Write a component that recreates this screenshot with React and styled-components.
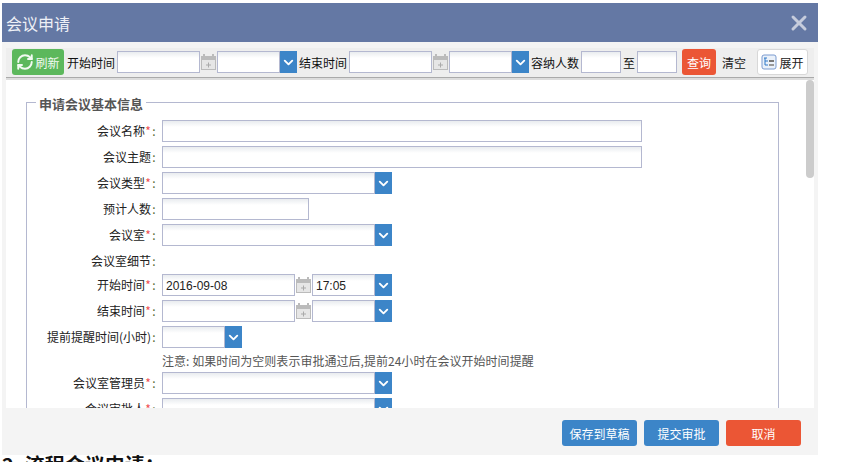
import React from 'react'
import styled, { createGlobalStyle } from 'styled-components'
import { RefreshCw, X, ChevronDown } from 'lucide-react'

const GlobalStyle = createGlobalStyle`
    html, body {
        margin: 0;
        padding: 0;
        height: 100%;
        overflow: hidden;
        background: #fff;
    }
    body {
        font-family: "Noto Sans CJK SC", "Liberation Sans", sans-serif;
        font-size: 12px;
        color: #222;
    }
    * {
        box-sizing: border-box;
    }
`

const Dialog = styled.div`
    width: 816px;
    height: 452px;
    margin: 3px 0 0 2px;
    background: #f4f4f4;
    display: flex;
    flex-direction: column;
`

const Header = styled.div`
    height: 39px;
    flex: none;
    background: #6478a4;
    display: flex;
    align-items: center;
    justify-content: space-between;
    padding: 0 7px 0 4px;
    color: #eef0f6;
    font-size: 16px;
`

const Close = styled.span`
    display: flex;
    color: #c6ccdc;
`

const Toolbar = styled.div`
    flex: none;
    height: 30px;
    margin: 6px 4px 0;
    padding: 1px 7px 0 6px;
    background: #eee;
    border-bottom: 1px solid #aaa;
    display: flex;
    align-items: flex-start;
`

const Divider = styled.div`
    flex: none;
    height: 2px;
    margin: 0 4px;
    background: #ddd;
`

const ToolLabel = styled.span`
    flex: none;
    width: ${p => p.$w}px;
    margin-left: ${p => p.$ml || 0}px;
    height: 26px;
    line-height: 28px;
    white-space: nowrap;
    color: #111;
`

const Button = styled.button`
    flex: none;
    width: ${p => p.$w}px;
    height: 26px;
    margin-left: ${p => p.$ml || 0}px;
    padding: 0;
    border: 0;
    border-radius: 3px;
    background: ${p => p.$bg};
    color: #fff;
    font: inherit;
    display: flex;
    align-items: center;
    justify-content: center;
`

const RefreshButton = styled(Button)`
    gap: 1px;
    color: #f2faf2;
`

const PlainButton = styled(Button)`
    background: transparent;
    color: #222;
`

const ExpandButton = styled(Button)`
    background: #fff;
    border: 1px solid #d8d8d8;
    color: #222;
    gap: 2px;
`

const Field = styled.input`
    flex: none;
    display: block;
    width: ${p => p.$w}px;
    height: 22px;
    margin: ${p => (p.$top ? `${p.$top}px` : 0)} 0 0 ${p => p.$ml || 0}px;
    padding: 1px 3px 0;
    border: 1px solid #b4b8d0;
    border-radius: 0;
    outline: none;
    background: linear-gradient(#e9ecef, #fff 6px);
    color: #222;
    font-family: "Liberation Sans", "Noto Sans CJK SC", sans-serif;
    font-size: 12px;
`

const Arrow = styled.span`
    flex: none;
    width: 17px;
    height: 22px;
    margin-top: ${p => p.$top || 0}px;
    background: #3c85c8;
    color: #fff;
    display: flex;
    align-items: center;
    justify-content: center;
`

const Cal = styled.svg`
    flex: none;
    width: 17px;
    height: 18px;
    margin-top: ${p => p.$top || 0}px;
`

const Body = styled.div`
    flex: 1;
    min-height: 0;
    margin: 0 4px;
    background: #fff;
    overflow: hidden;
    position: relative;
`

const ScrollThumb = styled.div`
    position: absolute;
    top: 0;
    right: 0;
    width: 8px;
    height: 98px;
    border-radius: 4px;
    background: #ccc;
`

const Group = styled.fieldset`
    margin: 14px 35px 0 20px;
    padding: 10px 0 40px;
    min-width: 0;
    border: 1px solid #b4b8d0;
    display: flex;
    flex-direction: column;
    gap: 4px;
`

const Legend = styled.legend`
    margin-left: 9px;
    padding: 0 3px;
    height: 16px;
    line-height: 20px;
    font-size: 13px;
    font-weight: 700;
    color: #555;
`

const Row = styled.div`
    display: grid;
    grid-template-columns: 130px 1fr;
    column-gap: 5px;
    height: ${p => p.$h || 22}px;
`

const Label = styled.label`
    text-align: right;
    line-height: 22px;
    color: #222;
    white-space: nowrap;

    em, i {
        display: inline-block;
        width: 6px;
        text-align: center;
        font-style: normal;
    }
    em {
        color: #f05050;
    }
    i {
        color: #556b2f;
    }
`

const Controls = styled.div`
    display: flex;
    align-items: flex-start;
`

const Note = styled.div`
    line-height: 18px;
    letter-spacing: 0.03px;
    color: #555;
    white-space: nowrap;
`

const Footer = styled.div`
    flex: none;
    height: 47px;
    display: flex;
    justify-content: flex-end;
    gap: 7px;
    padding: 12px 17px 0 0;
`

const FooterButton = styled(Button)`
    width: 75px;
`

const NextHeading = styled.h3`
    margin: 0 0 0 2px;
    font-size: 20px;
    line-height: 20px;
    color: #111;
    font-weight: 700;
    white-space: nowrap;
`

const CalendarIcon = ({ top }) => (
    <Cal $top={top} viewBox="0 0 17 18">
        <rect x="1.5" y="3.5" width="14" height="13" fill="#e6e6e6" stroke="#bbb" />
        <rect x="1" y="3" width="15" height="4" fill="#bbb" />
        <rect x="3" y="1" width="2" height="4" fill="#bbb" />
        <rect x="12" y="1" width="2" height="4" fill="#bbb" />
        <path d="M8.5 9.5v5M6 12h5" stroke="#aaa" />
    </Cal>
)

const TreeIcon = () => (
    <svg width="16" height="16" viewBox="0 0 16 16">
        <rect x="1" y="1" width="14" height="14" rx="2" fill="#eaf1fa" stroke="#7b9bd0" />
        <path d="M4 4v7h3M4 7h3M3 4h3" stroke="#2f78c8" fill="none" />
        <rect x="8" y="6" width="5" height="2" fill="#777" />
        <rect x="8" y="10" width="5" height="2" fill="#999" />
    </svg>
)

const Select = ({ w, value, top }) => (
    <>
        <Field $w={w} $top={top} defaultValue={value} />
        <Arrow $top={top}>
            <ChevronDown size={15} strokeWidth={3} />
        </Arrow>
    </>
)

const Item = ({ label, required, h, children }) => (
    <Row $h={h}>
        <Label>
            {label}
            {required && <em>*</em>}
            <i>:</i>
        </Label>
        <Controls>{children}</Controls>
    </Row>
)

const App = () => {
    return (
        <>
            <GlobalStyle />
            <Dialog>
                <Header>
                    会议申请
                    <Close>
                        <X size={24} strokeWidth={3} />
                    </Close>
                </Header>
                <Toolbar>
                    <RefreshButton $w={52} $bg="#5cb85c">
                        <RefreshCw size={18} strokeWidth={2.6} />
                        刷新
                    </RefreshButton>
                    <ToolLabel $w={50} $ml={3}>开始时间</ToolLabel>
                    <Field $w={83} $top={2} />
                    <CalendarIcon top={4} />
                    <Select w={63} top={2} />
                    <ToolLabel $w={50} $ml={2}>结束时间</ToolLabel>
                    <Field $w={83} $top={2} />
                    <CalendarIcon top={4} />
                    <Select w={63} top={2} />
                    <ToolLabel $w={50} $ml={2}>容纳人数</ToolLabel>
                    <Field $w={40} $top={2} />
                    <ToolLabel $w={12} $ml={2}>至</ToolLabel>
                    <Field $w={40} $top={2} $ml={2} />
                    <Button $w={34} $ml={5} $bg="#eb5635">查询</Button>
                    <PlainButton $w={36}>清空</PlainButton>
                    <ExpandButton $w={51} $ml={5}>
                        <TreeIcon />
                        展开
                    </ExpandButton>
                </Toolbar>
                <Divider />
                <Body>
                    <Group>
                        <Legend>申请会议基本信息</Legend>
                        <Item label="会议名称" required><Field $w={480} /></Item>
                        <Item label="会议主题"><Field $w={480} /></Item>
                        <Item label="会议类型" required><Select w={213} /></Item>
                        <Item label="预计人数"><Field $w={147} /></Item>
                        <Item label="会议室" required><Select w={213} /></Item>
                        <Item label="会议室细节" h={20} />
                        <Item label="开始时间" required>
                            <Field $w={133} defaultValue="2016-09-08" />
                            <CalendarIcon top={2} />
                            <Select w={63} value="17:05" />
                        </Item>
                        <Item label="结束时间" required>
                            <Field $w={133} />
                            <CalendarIcon top={2} />
                            <Select w={63} />
                        </Item>
                        <Item label="提前提醒时间(小时)"><Select w={63} /></Item>
                        <Row $h={16}>
                            <span />
                            <Note>注意: 如果时间为空则表示审批通过后,提前24小时在会议开始时间提醒</Note>
                        </Row>
                        <Item label="会议室管理员" required><Select w={213} /></Item>
                        <Item label="会议审批人" required><Select w={213} /></Item>
                    </Group>
                    <ScrollThumb />
                </Body>
                <Footer>
                    <FooterButton $bg="#3c85c8">保存到草稿</FooterButton>
                    <FooterButton $bg="#3c85c8">提交审批</FooterButton>
                    <FooterButton $bg="#eb5635">取消</FooterButton>
                </Footer>
            </Dialog>
            <NextHeading>2. 流程会议申请：</NextHeading>
        </>
    )
}

export default App
